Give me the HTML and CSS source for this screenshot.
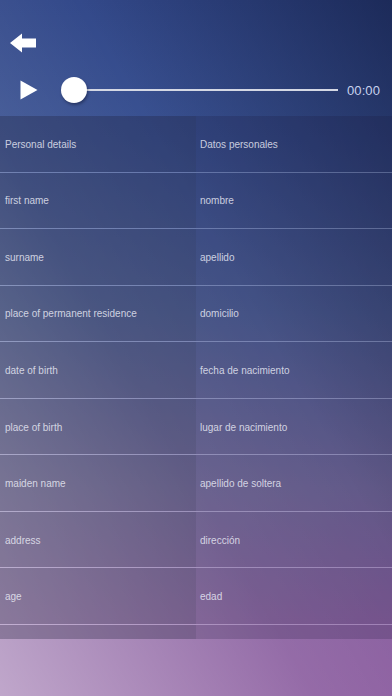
FILE: index.html
```html
<!DOCTYPE html>
<html>
<head>
<meta charset="utf-8">
<link rel="stylesheet" href="styles.css">
</head>
<body>
<div class="screen">
  <header class="top">
    <button class="back" aria-label="Back">
      <svg width="27" height="20" viewBox="0 0 27 20"><path d="M0 10 L12 0.5 L12 5.5 L26 5.5 L26 14.5 L12 14.5 L12 19.5 Z" fill="#fff"/></svg>
    </button>
    <div class="player">
      <svg class="play" width="18" height="20" viewBox="0 0 18 20"><path d="M0.5 0.5 L17.5 10 L0.5 19.5 Z" fill="#fff"/></svg>
      <div class="slider">
        <span class="thumb"></span>
        <span class="track"></span>
      </div>
      <span class="time">00:00</span>
    </div>
  </header>
  <div class="list">
    <div class="row"><div class="cell en">Personal details</div><div class="cell es">Datos personales</div></div>
    <div class="row"><div class="cell en">first name</div><div class="cell es">nombre</div></div>
    <div class="row"><div class="cell en">surname</div><div class="cell es">apellido</div></div>
    <div class="row"><div class="cell en">place of permanent residence</div><div class="cell es">domicilio</div></div>
    <div class="row"><div class="cell en">date of birth</div><div class="cell es">fecha de nacimiento</div></div>
    <div class="row"><div class="cell en">place of birth</div><div class="cell es">lugar de nacimiento</div></div>
    <div class="row"><div class="cell en">maiden name</div><div class="cell es">apellido de soltera</div></div>
    <div class="row"><div class="cell en">address</div><div class="cell es">dirección</div></div>
    <div class="row"><div class="cell en">age</div><div class="cell es">edad</div></div>
    <div class="row"><div class="cell en">&nbsp;</div><div class="cell es">&nbsp;</div></div>
  </div>
</div>
</body>
</html>
```
FILE: styles.css
```css
html, body {
  margin: 0;
  padding: 0;
}
body {
  width: 392px;
  height: 696px;
  overflow: hidden;
  font-family: "Liberation Sans", Arial, sans-serif;
}
.screen {
  width: 392px;
  height: 696px;
  display: grid;
  grid-template-rows: 116px 523px 1fr;
  background:
    linear-gradient(to top right, rgba(255,255,255,0.45) 0%, rgba(255,255,255,0.08) 40%, rgba(0,0,20,0.0) 60%, rgba(0,5,30,0.45) 100%),
    linear-gradient(to bottom, #33498a 0%, #3a5292 20%, #4f6299 45%, #756c9e 70%, #8a60a0 90%, #8c5ea0 100%);
}
.top {
  display: flex;
  flex-direction: column;
  padding: 33px 0 0 0;
}
.back {
  border: 0;
  background: none;
  padding: 0;
  margin: 0 0 0 10px;
  width: 27px;
  height: 20px;
  display: block;
}
.back svg { display: block; }
.player {
  display: flex;
  align-items: center;
  margin-top: 24px;
  height: 26px;
  padding-left: 20px;
}
.play { display: block; flex: none; }
.slider {
  display: flex;
  align-items: center;
  margin-left: 23px;
  width: 277px;
}
.thumb {
  width: 26px;
  height: 26px;
  border-radius: 50%;
  background: #fff;
  box-shadow: 1px 2px 3px rgba(0,0,20,0.35);
  flex: none;
  position: relative;
  z-index: 1;
}
.track {
  flex: 1;
  height: 2px;
  background: #d4d8e4;
  margin-left: -2px;
}
.time {
  margin-left: 9px;
  font-size: 13px;
  color: #c9d3ee;
  letter-spacing: 0.1px;
}
.list {
  overflow: hidden;
  display: flex;
  flex-direction: column;
}
.row {
  flex: none;
  height: 56.55px;
  display: grid;
  grid-template-columns: 196px 196px;
  box-sizing: border-box;
  border-bottom: 1px solid rgba(225,225,245,0.24);
}
.cell {
  display: flex;
  align-items: center;
  padding-top: 1px;
  font-size: 10px;
  color: rgba(236,238,248,0.82);
  white-space: nowrap;
}
.en {
  padding-left: 5px;
  background: rgba(30,30,55,0.3);
}
.es {
  padding-left: 4px;
  background: rgba(25,20,55,0.2);
}
```
